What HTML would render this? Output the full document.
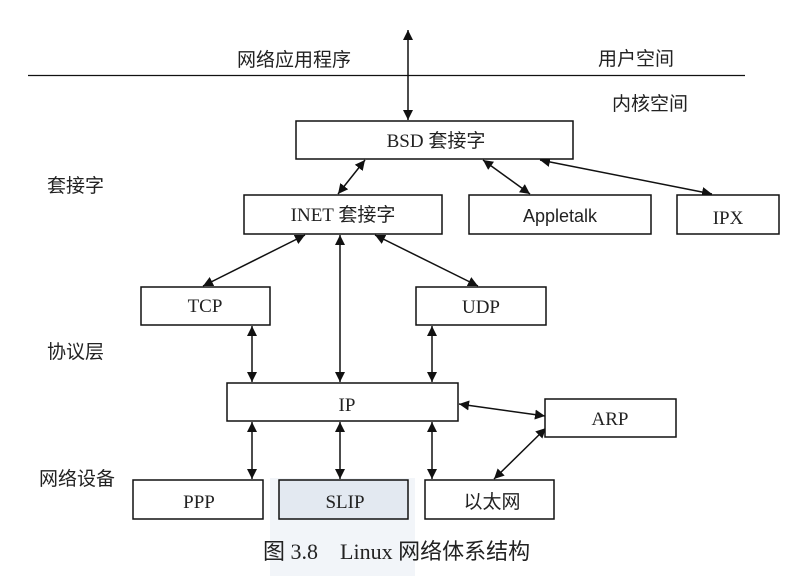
<!DOCTYPE html>
<html><head><meta charset="utf-8"><style>
html,body{margin:0;padding:0;background:#fff;}
svg{display:block;}
text{font-family:"Liberation Serif","Noto Serif CJK SC",serif;font-size:19px;fill:#222;}
.c{font-family:"Liberation Serif","Noto Sans CJK SC",sans-serif;}
</style></head><body>
<svg width="797" height="576" viewBox="0 0 797 576" xmlns="http://www.w3.org/2000/svg">
<defs>
<marker id="a" viewBox="0 0 10 10" refX="10" refY="5" markerWidth="10" markerHeight="10" markerUnits="userSpaceOnUse" orient="auto-start-reverse">
<path d="M0,0 L10,5 L0,10 z" fill="#111"/></marker>
</defs>
<rect x="270" y="478" width="145" height="98" fill="#f2f5f9"/>
<line x1="28" y1="75.5" x2="745" y2="75.5" stroke="#111" stroke-width="1.3"/>
<g stroke="#111" stroke-width="1.5" fill="none" marker-start="url(#a)" marker-end="url(#a)">
<line x1="408" y1="30" x2="408" y2="120"/>
<line x1="365" y1="160" x2="338" y2="194"/>
<line x1="483" y1="160" x2="530" y2="194"/>
<line x1="540" y1="160" x2="712" y2="194"/>
<line x1="305" y1="235" x2="203" y2="286"/>
<line x1="340" y1="235" x2="340" y2="382"/>
<line x1="375" y1="235" x2="478" y2="286"/>
<line x1="252" y1="326" x2="252" y2="382"/>
<line x1="432" y1="326" x2="432" y2="382"/>
<line x1="459" y1="404" x2="545" y2="416"/>
<line x1="252" y1="422" x2="252" y2="479"/>
<line x1="340" y1="422" x2="340" y2="479"/>
<line x1="432" y1="422" x2="432" y2="479"/>
<line x1="546" y1="428" x2="494" y2="479"/>
</g>
<g stroke="#111" stroke-width="1.5" fill="#fff">
<rect x="296" y="121" width="277" height="38"/>
<rect x="244" y="195" width="198" height="39"/>
<rect x="469" y="195" width="182" height="39"/>
<rect x="677" y="195" width="102" height="39"/>
<rect x="141" y="287" width="129" height="38"/>
<rect x="416" y="287" width="130" height="38"/>
<rect x="227" y="383" width="231" height="38"/>
<rect x="545" y="399" width="131" height="38"/>
<rect x="133" y="480" width="130" height="39"/>
<rect x="279" y="480" width="129" height="39" fill="#e3e9f1"/>
<rect x="425" y="480" width="129" height="39"/>
</g>
<g text-anchor="middle">
<text x="436" y="147">BSD <tspan class="c">套接字</tspan></text>
<text x="343" y="221">INET <tspan class="c">套接字</tspan></text>
<text x="560" y="222" style="font-family:'Liberation Sans',sans-serif;font-size:18px">Appletalk</text>
<text x="728" y="224">IPX</text>
<text x="205" y="312">TCP</text>
<text x="481" y="313">UDP</text>
<text x="347" y="411">IP</text>
<text x="610" y="425">ARP</text>
<text x="199" y="508">PPP</text>
<text x="345" y="508">SLIP</text>
<text class="c" x="492" y="508">以太网</text>
</g>
<text x="263" y="559" style="font-size:22px" xml:space="preserve"><tspan class="c">图</tspan> 3.8    Linux <tspan class="c">网络体系结构</tspan></text>
<text class="c" x="237" y="66">网络应用程序</text>
<text class="c" x="598" y="65">用户空间</text>
<text class="c" x="612" y="110">内核空间</text>
<text class="c" x="47" y="192">套接字</text>
<text class="c" x="47" y="358">协议层</text>
<text class="c" x="39" y="485">网络设备</text>
</svg>
</body></html>
